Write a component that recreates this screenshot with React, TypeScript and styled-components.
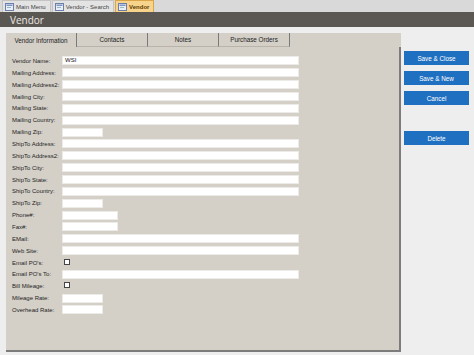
import React from "react";
import styled, { createGlobalStyle } from "styled-components";

const GlobalStyle = createGlobalStyle`
  html, body {
    margin: 0;
    padding: 0;
    background: #eeeeee;
    font-family: "Open Sans", "Liberation Sans", sans-serif;
  }
`;

type Field = { label: string; kind?: "full" | "zip" | "phone" | "check"; value?: string };

const fields: Field[] = [
  { label: "Vendor Name:", value: "WSI" },
  { label: "Mailing Address:" },
  { label: "Mailing Address2:" },
  { label: "Mailing City:" },
  { label: "Mailing State:" },
  { label: "Mailing Country:" },
  { label: "Mailing Zip:", kind: "zip" },
  { label: "ShipTo Address:" },
  { label: "ShipTo Address2:" },
  { label: "ShipTo City:" },
  { label: "ShipTo State:" },
  { label: "ShipTo Country:" },
  { label: "ShipTo Zip:", kind: "zip" },
  { label: "Phone#:", kind: "phone" },
  { label: "Fax#:", kind: "phone" },
  { label: "EMail:" },
  { label: "Web Site:" },
  { label: "Email PO's:", kind: "check" },
  { label: "Email PO's To:" },
  { label: "Bill Mileage:", kind: "check" },
  { label: "Mileage Rate:", kind: "zip" },
  { label: "Overhead Rate:", kind: "zip" },
];

const widths = { full: 237, zip: 41, phone: 56 };

function FormIcon() {
  return (
    <svg width="9" height="8" viewBox="0 0 9 8">
      <rect x="0.5" y="0.5" width="8" height="7" fill="#e8eef8" stroke="#6b7fa8" />
      <rect x="1.5" y="1.5" width="6" height="1.5" fill="#7e95c4" />
      <rect x="2" y="4" width="4" height="0.8" fill="#8aa" />
    </svg>
  );
}

export default function App() {
  return (
    <Page>
      <GlobalStyle />
      <DocTabs>
        <DocTab>
          <FormIcon />
          Main Menu
        </DocTab>
        <DocTab>
          <FormIcon />
          Vendor - Search
        </DocTab>
        <DocTab $active>
          <FormIcon />
          Vendor
        </DocTab>
      </DocTabs>
      <TitleBar>Vendor</TitleBar>
      <Body>
        <TabControl>
          <TabStrip>
            <Tab $active>Vendor Information</Tab>
            <Tab>Contacts</Tab>
            <Tab>Notes</Tab>
            <Tab>Purchase Orders</Tab>
            <TabFill />
          </TabStrip>
          <Panel>
            <FieldGrid>
              {fields.map((f) => (
                <Row key={f.label}>
                  <Label>{f.label}</Label>
                  {f.kind === "check" ? (
                    <Check />
                  ) : (
                    <Input $w={widths[f.kind ?? "full"]}>{f.value}</Input>
                  )}
                </Row>
              ))}
            </FieldGrid>
          </Panel>
        </TabControl>
        <Actions>
          <ActionButton>Save &amp; Close</ActionButton>
          <ActionButton>Save &amp; New</ActionButton>
          <ActionButton>Cancel</ActionButton>
          <ActionButton $gap>Delete</ActionButton>
        </Actions>
      </Body>
    </Page>
  );
}

const Page = styled.div`
  width: 474px;
  height: 355px;
  overflow: hidden;
  background: #eeeeee;
`;

const DocTabs = styled.div`
  display: flex;
  align-items: flex-end;
  gap: 1px;
  height: 12px;
  padding-left: 2px;
  background: #d9d9d9;
`;

const DocTab = styled.div<{ $active?: boolean }>`
  display: flex;
  align-items: center;
  gap: 2px;
  height: 11px;
  padding: 0 4px 0 2px;
  font-family: "Liberation Sans", sans-serif;
  font-size: 6px;
  font-weight: ${(p) => (p.$active ? 700 : 400)};
  color: ${(p) => (p.$active ? "#5a3a00" : "#444")};
  background: ${(p) => (p.$active ? "#f7d38c" : "#e3e3e3")};
  border: 1px solid ${(p) => (p.$active ? "#d9a64a" : "#c4c4c4")};
  border-bottom: none;
  white-space: nowrap;
`;

const TitleBar = styled.div`
  height: 15px;
  display: flex;
  align-items: center;
  padding-left: 10px;
  background: #5b5752;
  color: #ece9e4;
  font-size: 10px;
`;

const Body = styled.div`
  display: flex;
  align-items: flex-start;
  padding: 6px 0 0 6px;
  gap: 3px;
`;

const TabControl = styled.div`
  width: 395px;
  display: flex;
  flex-direction: column;
`;

const TabStrip = styled.div`
  display: flex;
  height: 14px;
`;

const Tab = styled.div<{ $active?: boolean }>`
  width: 71px;
  display: flex;
  align-items: center;
  justify-content: center;
  font-family: "Liberation Sans", sans-serif;
  font-size: 6.3px;
  color: #222;
  background: #d4d0c8;
  border-right: 1px solid #7a7a7a;
  border-bottom: ${(p) => (p.$active ? "none" : "1px solid #b8b4ac")};
  box-sizing: border-box;
`;

const TabFill = styled.div`
  flex: 1;
  background: #d4d0c8;
`;

const Panel = styled.div`
  height: 305px;
  box-sizing: border-box;
  background: #d4d0c8;
  border-right: 2px solid #7c7c7c;
  border-bottom: 2px solid #7c7c7c;
  padding: 8px 0 0 6px;
`;

const FieldGrid = styled.div`
  display: grid;
  grid-auto-rows: 11.86px;
`;

const Row = styled.div`
  display: grid;
  grid-template-columns: 50px 1fr;
  align-items: center;
`;

const Label = styled.div`
  font-family: "Liberation Sans", sans-serif;
  font-size: 6px;
  color: #1e1e1e;
  white-space: nowrap;
`;

const Input = styled.div<{ $w: number }>`
  width: ${(p) => p.$w}px;
  height: 9px;
  box-sizing: border-box;
  background: #ffffff;
  border: 1px solid #ecebe8;
  font-family: "Liberation Sans", sans-serif;
  font-size: 6px;
  line-height: 7px;
  padding-left: 2px;
  color: #111;
`;

const Check = styled.div`
  width: 4px;
  height: 4px;
  margin-left: 2px;
  margin-bottom: 2px;
  border: 1px solid #444;
  background: #fff;
`;

const Actions = styled.div`
  display: flex;
  flex-direction: column;
  gap: 6px;
  padding-top: 18px;
`;

const ActionButton = styled.div<{ $gap?: boolean }>`
  width: 65px;
  height: 14px;
  display: flex;
  align-items: center;
  justify-content: center;
  background: #1f70c1;
  color: #ffffff;
  font-family: "Liberation Sans", sans-serif;
  font-size: 6.3px;
  margin-top: ${(p) => (p.$gap ? "20px" : "0")};
`;
